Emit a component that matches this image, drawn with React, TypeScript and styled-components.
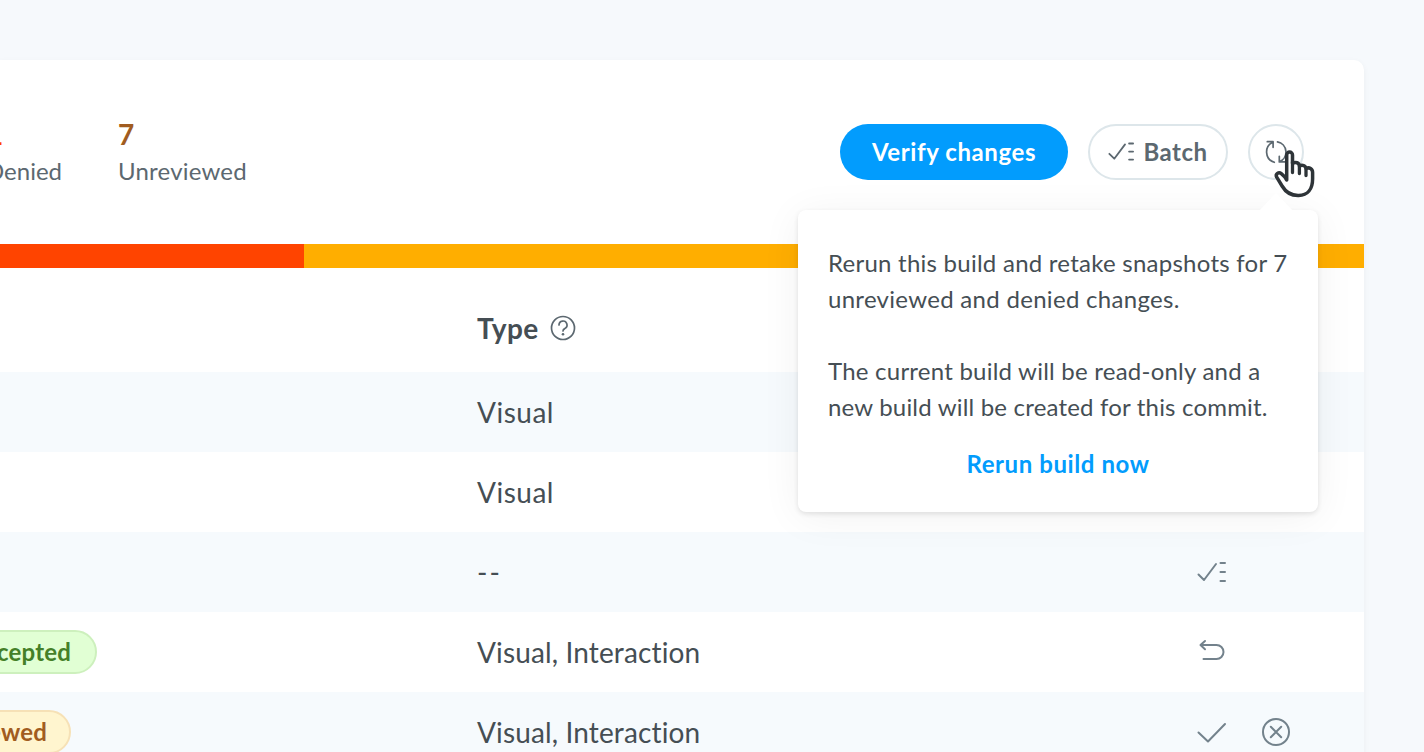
import React from "react";
import styled, { createGlobalStyle } from "styled-components";

const Global = createGlobalStyle`
  *, *::before, *::after { box-sizing: border-box; }
  body {
    margin: 0;
    background: #f6f9fc;
    font-family: Lato, "Open Sans", sans-serif;
    color: #454e54;
    overflow: hidden;
  }
`;

const Page = styled.div`
  height: 752px;
  padding: 60px 60px 0 0;
  overflow: hidden;
  background: #f6f9fc;
`;

const Card = styled.main`
  position: relative;
  height: 800px;
  background: #ffffff;
  border-radius: 0 10px 0 0;
  box-shadow: 0 2px 6px rgba(0, 0, 0, 0.05);
`;

const Header = styled.header`
  display: flex;
  justify-content: space-between;
  height: 184px;
  padding: 58px 60px 0 0;
`;

const Stats = styled.div`
  display: flex;
  gap: 56px;
  margin-left: -14px;
`;

const Stat = styled.div`
  display: flex;
  flex-direction: column;
`;

const Count = styled.strong<{ $color: string; $indent?: number }>`
  padding-left: ${(p) => p.$indent ?? 0}px;
  font-size: 28px;
  line-height: 32px;
  font-weight: 700;
  color: ${(p) => p.$color};
`;

const StatLabel = styled.span<{ $spacing: string }>`
  margin-top: 3px;
  font-size: 24px;
  line-height: 36px;
  letter-spacing: ${(p) => p.$spacing};
  color: #5c6870;
`;

const Actions = styled.div`
  position: relative;
  display: flex;
  gap: 20px;
  padding-top: 6px;
`;

const Button = styled.button<{ $width: number; $primary?: boolean }>`
  display: flex;
  align-items: center;
  justify-content: center;
  gap: 9px;
  width: ${(p) => p.$width}px;
  height: 56px;
  padding: 0;
  border: ${(p) => (p.$primary ? "none" : "2px solid #dde6ea")};
  border-radius: 28px;
  background: ${(p) => (p.$primary ? "#029cfd" : "#ffffff")};
  color: ${(p) => (p.$primary ? "#ffffff" : "#5c6870")};
  font: 700 24px/32px Lato, sans-serif;
  letter-spacing: ${(p) => (p.$primary ? "0.6px" : "0.5px")};
  white-space: nowrap;
`;

const Progress = styled.div`
  display: flex;
  height: 24px;
`;

const Segment = styled.div<{ $color: string; $width?: number }>`
  flex: ${(p) => (p.$width ? `0 0 ${p.$width}px` : "1")};
  background: ${(p) => p.$color};
`;

const Row = styled.div<{ $tinted?: boolean; $head?: boolean }>`
  display: grid;
  grid-template-columns: 477px 1fr auto;
  align-items: center;
  height: ${(p) => (p.$head ? 104 : 80)}px;
  padding: ${(p) => (p.$head ? "16px 72px 0 0" : "0 72px 0 0")};
  background: ${(p) => (p.$tinted ? "#f6fafd" : "#ffffff")};
`;

const StatusCell = styled.div<{ $end: number }>`
  display: flex;
  justify-content: flex-end;
  width: ${(p) => p.$end}px;
`;

const Pill = styled.span<{ $tone: "positive" | "warning" }>`
  flex: none;
  padding: 0 ${(p) => (p.$tone === "positive" ? 24 : 22)}px 0 24px;
  border: 2px solid ${(p) => (p.$tone === "positive" ? "#cdf0bd" : "#f6e1b6")};
  border-radius: 22px;
  background: ${(p) => (p.$tone === "positive" ? "#e1ffd4" : "#fff5cf")};
  color: ${(p) => (p.$tone === "positive" ? "#448028" : "#a15c20")};
  font-size: 24px;
  line-height: 40px;
  font-weight: 700;
  letter-spacing: 0.2px;
`;

const Heading = styled.div`
  display: flex;
  align-items: center;
  gap: 11px;
  font-size: 28px;
  line-height: 36px;
  font-weight: 700;
  letter-spacing: 0.4px;
`;

const TypeText = styled.span<{ $spacing: string }>`
  font-size: 28px;
  line-height: 36px;
  letter-spacing: ${(p) => p.$spacing};
`;

const RowActions = styled.div`
  display: grid;
  grid-template-columns: 32px 32px;
  column-gap: 32px;
  color: #73828c;
`;

const Popover = styled.section`
  position: absolute;
  top: 92px;
  right: -14px;
  z-index: 1;
  width: 520px;
  height: 302px;
  padding: 35px 30px 0;
  border-radius: 8px;
  background: #ffffff;
  box-shadow: 0 2px 5px rgba(0, 0, 0, 0.1), 0 5px 40px rgba(0, 0, 0, 0.06);
`;

const Arrow = styled.svg`
  position: absolute;
  top: -17px;
  right: 25px;
`;

const Paragraph = styled.p`
  margin: 0 0 36px;
  font-size: 24px;
  line-height: 36px;
`;

const Line = styled.span<{ $spacing: string }>`
  display: block;
  letter-spacing: ${(p) => p.$spacing};
  white-space: nowrap;
`;

const Link = styled.a`
  display: block;
  margin-top: -15px;
  color: #029cfd;
  font-size: 24px;
  line-height: 36px;
  font-weight: 700;
  letter-spacing: 0.58px;
  text-align: center;
`;

const Pointer = styled.svg`
  position: absolute;
  top: 32px;
  right: -14px;
  z-index: 2;
`;

const Icon = styled.svg`
  display: block;
  flex: none;
  fill: none;
  stroke: currentColor;
  stroke-width: 2;
  stroke-linecap: round;
  stroke-linejoin: round;
`;

const BatchIcon = ({ small }: { small?: boolean }) => (
  <Icon width={small ? 26 : 32} height={small ? 26 : 32} viewBox={small ? "1 2 29 29" : "0 0 32 32"}>
    <path d="M2.500 18.500 8 24 20 8M24.500 7h4.500M24.500 16h4.500M24.500 25h4.500" />
  </Icon>
);

const SyncIcon = () => (
  <Icon width="28" height="28" viewBox="0 0 28 28" color="#5c6870">
    <path
      strokeWidth="1.700"
      d="M5.300 3.700h5.800v5.600M11 4.100A10.800 10.800 0 0 0 12.300 24.300M15.500 3.900A10.400 10.400 0 0 1 17.300 23.800M17.300 18.300v5.600h6"
    />
  </Icon>
);

const HelpIcon = () => (
  <Icon width="26" height="26" viewBox="0 0 26 26" color="#5c6870">
    <g strokeWidth="1.700">
      <circle cx="13" cy="13" r="11.500" />
      <path d="M9 10a4 4 0 1 1 5.800 3.600Q13 14.400 13 16" />
    </g>
    <circle cx="13" cy="19.200" r="1.300" fill="currentColor" stroke="none" />
  </Icon>
);

const UndoIcon = () => (
  <Icon width="32" height="32" viewBox="0 0 32 32">
    <path d="M9 5 4.500 9 9 13.200M5 9h15.500a7 7 0 0 1 0 14H7.500" />
  </Icon>
);

const CheckIcon = () => (
  <Icon width="32" height="32" viewBox="0 0 32 32">
    <path d="M2.500 16.500 12 25.500 29 8" />
  </Icon>
);

const DenyIcon = () => (
  <Icon width="32" height="32" viewBox="0 0 32 32">
    <circle cx="16" cy="16" r="13" />
    <path d="m10.800 10.800 10.400 10.400M21.200 10.800 10.800 21.200" />
  </Icon>
);

export default function App() {
  return (
    <>
      <Global />
      <Page>
        <Card>
          <Header>
            <Stats>
              <Stat>
                <Count $color="#ff4400" $indent={1}>1</Count>
                <StatLabel $spacing="0px">Denied</StatLabel>
              </Stat>
              <Stat>
                <Count $color="#a15c20">7</Count>
                <StatLabel $spacing="0.2px">Unreviewed</StatLabel>
              </Stat>
            </Stats>
            <Actions>
              <Button $width={228} $primary>Verify changes</Button>
              <Button $width={140}>
                <BatchIcon small />
                Batch
              </Button>
              <Button $width={56} aria-label="Rerun build">
                <SyncIcon />
              </Button>
              <Popover>
                <Arrow width="34" height="18" viewBox="0 0 34 18">
                  <path d="M0 18 17 0l17 18z" fill="#fff" />
                </Arrow>
                <Paragraph>
                  <Line $spacing="0.25px">Rerun this build and retake snapshots for 7</Line>
                  <Line $spacing="0.3px">unreviewed and denied changes.</Line>
                </Paragraph>
                <Paragraph>
                  <Line $spacing="0.23px">The current build will be read-only and a</Line>
                  <Line $spacing="0.19px">new build will be created for this commit.</Line>
                </Paragraph>
                <Link>Rerun build now</Link>
              </Popover>
              <Pointer width="48" height="52" viewBox="1270 150 48 52">
                <path
                  d="M1286.700 180V155a2.900 2.900 0 0 1 5.800 0v8.300c3-1.700 6.700-.6 6.900 2.600c3-1.400 6.300-.3 6.600 2.500c3.400-1.400 6.600.2 6.600 4v6.500c0 10-5 16.400-14 16.600c-8 .2-13-3.500-16.500-9.500l-5.400-8.800c-1.600-3.300 2-5.600 4.600-3.500c2.500 2 4 3.300 5.400 6.300"
                  fill="#fff"
                  stroke="#2e3438"
                  strokeWidth="3.500"
                  strokeLinejoin="round"
                  strokeLinecap="round"
                />
                <path
                  d="M1292.500 162v10.500M1299.400 166v7.500M1306 168.500v7"
                  fill="none"
                  stroke="#2e3438"
                  strokeWidth="3.300"
                  strokeLinecap="round"
                />
              </Pointer>
            </Actions>
          </Header>
          <Progress>
            <Segment $color="#ff4400" $width={304} />
            <Segment $color="#ffae00" />
          </Progress>
          <Row $head>
            <span />
            <Heading>
              Type <HelpIcon />
            </Heading>
          </Row>
          <Row $tinted>
            <span />
            <TypeText $spacing="0.5px">Visual</TypeText>
          </Row>
          <Row>
            <span />
            <TypeText $spacing="0.5px">Visual</TypeText>
          </Row>
          <Row $tinted>
            <span />
            <TypeText $spacing="2px">--</TypeText>
            <RowActions>
              <BatchIcon />
            </RowActions>
          </Row>
          <Row>
            <StatusCell $end={97}>
              <Pill $tone="positive">Accepted</Pill>
            </StatusCell>
            <TypeText $spacing="0.13px">Visual, Interaction</TypeText>
            <RowActions>
              <UndoIcon />
            </RowActions>
          </Row>
          <Row $tinted>
            <StatusCell $end={71}>
              <Pill $tone="warning">Unreviewed</Pill>
            </StatusCell>
            <TypeText $spacing="0.13px">Visual, Interaction</TypeText>
            <RowActions>
              <CheckIcon />
              <DenyIcon />
            </RowActions>
          </Row>
        </Card>
      </Page>
    </>
  );
}
